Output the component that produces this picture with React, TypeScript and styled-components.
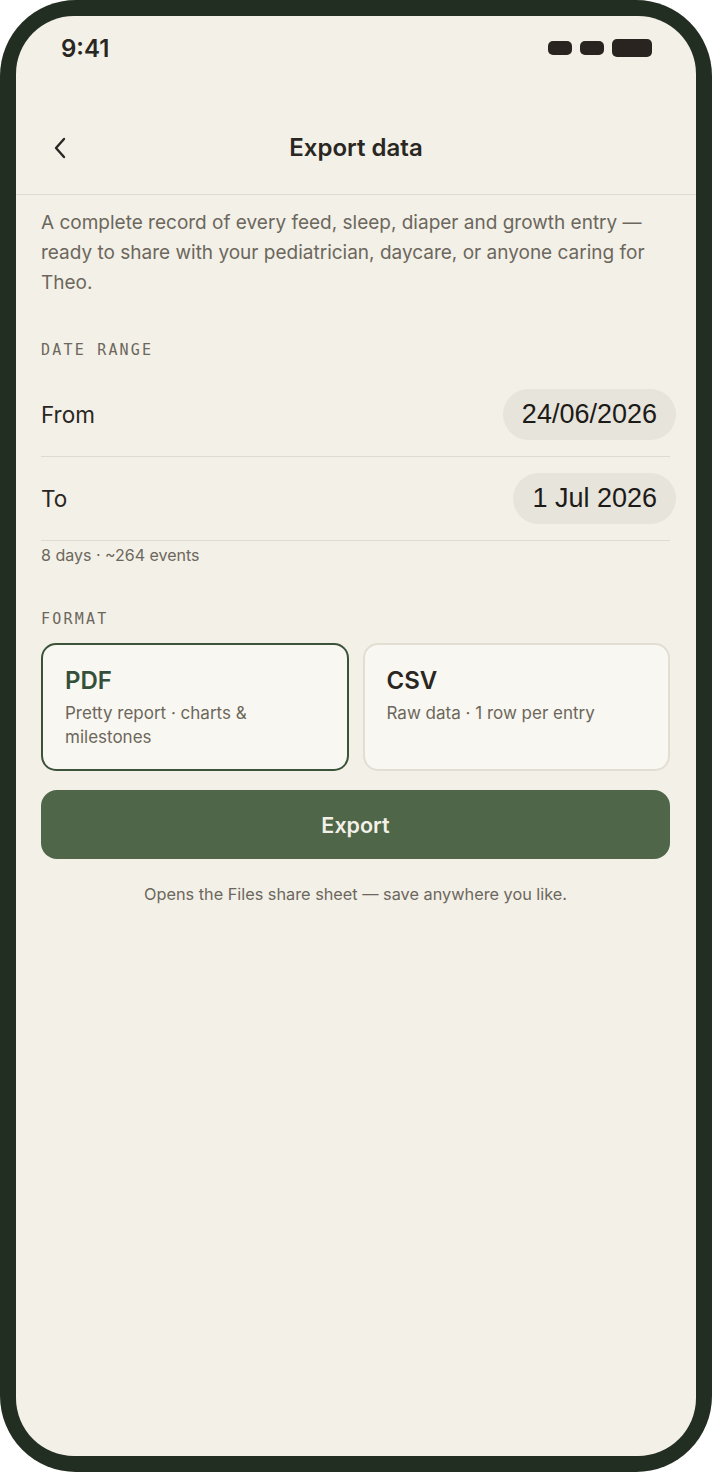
import React, { useState } from "react";
import styled, { createGlobalStyle } from "styled-components";

const Global = createGlobalStyle`
  html, body { margin: 0; padding: 0; background: #ffffff; }
  * { box-sizing: border-box; }
  body { font-family: Inter, "Noto Sans", sans-serif; }
`;

const Frame = styled.div`
  width: 712px;
  height: 1472px;
  background: #232e22;
  border-radius: 76px;
  padding: 16px;
`;

const Screen = styled.div`
  width: 100%;
  height: 100%;
  background: #f3f0e8;
  border-radius: 58px;
  overflow: hidden;
  display: flex;
  flex-direction: column;
`;

const StatusBar = styled.div`
  height: 64px;
  padding: 0 44px 0 45px;
  display: flex;
  align-items: center;
  justify-content: space-between;
`;

const Time = styled.span`
  font-family: Inter, sans-serif;
  font-weight: 600;
  font-size: 24px;
  color: #2a2622;
`;

const Indicators = styled.div`
  display: flex;
  align-items: center;
  gap: 8px;
`;

const Pill = styled.span<{ $w: number; $h: number }>`
  display: block;
  width: ${(p) => p.$w}px;
  height: ${(p) => p.$h}px;
  border-radius: 5px;
  background: #2a2420;
`;

const NavBar = styled.div`
  height: 115px;
  border-bottom: 1px solid #dedad0;
  display: grid;
  grid-template-columns: 60px 1fr 60px;
  align-items: end;
  padding: 0 0 32px 30px;
`;

const BackButton = styled.button`
  border: none;
  background: none;
  padding: 0;
  width: 28px;
  height: 28px;
  display: flex;
  align-items: center;
  justify-content: center;
  cursor: pointer;
`;

const Title = styled.h1`
  margin: 0;
  text-align: center;
  font-size: 24px;
  line-height: 28px;
  font-weight: 600;
  color: #2a2622;
  padding-right: 30px;
`;

const Content = styled.div`
  padding: 13px 26px 0 25px;
  display: flex;
  flex-direction: column;
`;

const Lead = styled.p`
  margin: 0;
  font-size: 19px;
  line-height: 30px;
  color: #6c675c;
`;

const SectionLabel = styled.div<{ $top: number }>`
  margin-top: ${(p) => p.$top}px;
  font-family: "DejaVu Sans Mono", "Liberation Mono", monospace;
  font-size: 15px;
  line-height: 20px;
  letter-spacing: 2.2px;
  color: #6c675c;
`;

const DateRow = styled.div`
  display: flex;
  align-items: center;
  justify-content: space-between;
  padding: 16px 0;
  border-bottom: 1px solid #dedad0;
`;

const DateLabel = styled.span`
  font-size: 22.5px;
  color: #2a2622;
`;

const DatePill = styled.span`
  height: 51px;
  margin-right: -6px;
  padding: 0 19px;
  border-radius: 26px;
  background: #e7e4dc;
  display: inline-flex;
  align-items: center;
  font-family: "Liberation Sans", Arial, sans-serif;
  font-size: 27px;
  color: #1d1b18;
`;

const Rows = styled.div`
  margin-top: 13px;
  display: flex;
  flex-direction: column;
`;

const Meta = styled.div`
  margin-top: 4px;
  font-size: 16px;
  line-height: 20px;
  color: #6c675c;
`;

const Cards = styled.div`
  margin-top: 14px;
  display: grid;
  grid-template-columns: 1fr 1fr;
  gap: 14px;
`;

const Card = styled.button<{ $active: boolean }>`
  height: 128px;
  border-radius: 15px;
  border: 2px solid ${(p) => (p.$active ? "#3c5339" : "#e2ded3")};
  background: #f9f7f1;
  padding: 22px 22px;
  text-align: left;
  display: flex;
  flex-direction: column;
  align-items: flex-start;
  gap: 6px;
  cursor: pointer;
  font-family: inherit;
`;

const CardTitle = styled.span<{ $active: boolean }>`
  font-size: 24px;
  line-height: 28px;
  font-weight: 600;
  color: ${(p) => (p.$active ? "#34503a" : "#2a2622")};
`;

const CardSub = styled.span`
  font-size: 17px;
  line-height: 24px;
  color: #6c675c;
`;

const ExportButton = styled.button`
  margin-top: 19px;
  height: 69px;
  border: none;
  border-radius: 16px;
  background: #4f6649;
  color: #f3f0e8;
  font-family: inherit;
  font-size: 21.5px;
  font-weight: 600;
  cursor: pointer;
`;

const Footnote = styled.p`
  margin: 24px 0 0;
  text-align: center;
  font-size: 16.3px;
  line-height: 22px;
  color: #6c675c;
`;

export default function App() {
  const [format, setFormat] = useState<"pdf" | "csv">("pdf");
  return (
    <>
      <Global />
      <Frame>
        <Screen>
          <StatusBar>
            <Time>9:41</Time>
            <Indicators>
              <Pill $w={24} $h={14} />
              <Pill $w={24} $h={14} />
              <Pill $w={40} $h={18} />
            </Indicators>
          </StatusBar>
          <NavBar>
            <BackButton aria-label="Back">
              <svg width="14" height="22" viewBox="0 0 14 22" fill="none">
                <path d="M11 2 L3 11 L11 20" stroke="#2a2622" strokeWidth="2.4" strokeLinecap="round" strokeLinejoin="round" />
              </svg>
            </BackButton>
            <Title>Export data</Title>
            <span />
          </NavBar>
          <Content>
            <Lead>
              A complete record of every feed, sleep, diaper and growth entry — ready to share with your pediatrician, daycare, or anyone caring for Theo.
            </Lead>
            <SectionLabel $top={42}>DATE RANGE</SectionLabel>
            <Rows>
              <DateRow>
                <DateLabel>From</DateLabel>
                <DatePill>24/06/2026</DatePill>
              </DateRow>
              <DateRow>
                <DateLabel>To</DateLabel>
                <DatePill>1 Jul 2026</DatePill>
              </DateRow>
            </Rows>
            <Meta>8 days · ~264 events</Meta>
            <SectionLabel $top={44}>FORMAT</SectionLabel>
            <Cards>
              <Card $active={format === "pdf"} onClick={() => setFormat("pdf")}>
                <CardTitle $active={format === "pdf"}>PDF</CardTitle>
                <CardSub>Pretty report · charts &amp; milestones</CardSub>
              </Card>
              <Card $active={format === "csv"} onClick={() => setFormat("csv")}>
                <CardTitle $active={format === "csv"}>CSV</CardTitle>
                <CardSub>Raw data · 1 row per entry</CardSub>
              </Card>
            </Cards>
            <ExportButton>Export</ExportButton>
            <Footnote>Opens the Files share sheet — save anywhere you like.</Footnote>
          </Content>
        </Screen>
      </Frame>
    </>
  );
}
